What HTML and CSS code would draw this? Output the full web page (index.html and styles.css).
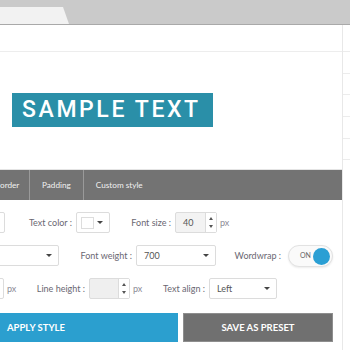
FILE: index.html
```html
<!DOCTYPE html>
<html lang="en">
<head>
  <meta charset="UTF-8" />
  <title>Text style editor</title>
  <link rel="stylesheet" href="styles.css">
</head>
<body>

<div class="topbar">
  <div class="tab"></div>
</div>

<div class="layout">
  <main class="editor">
    <div class="strip"></div>

    <div class="preview">
      <span class="sample">SAMPLE TEXT</span>
    </div>

    <nav class="tabs">
      <span class="tab-item first">order</span>
      <span class="tab-item">Padding</span>
      <span class="tab-item">Custom style</span>
    </nav>

    <div class="form">
      <div class="row">
        <span class="field cut-1"></span>
        <label class="lbl l-color">Text color :</label>
        <span class="field swatch"><i class="chip"></i><i class="caret"></i></span>
        <label class="lbl l-size">Font size :</label>
        <span class="field num">40<span class="spin"><i class="up"></i><i class="down"></i></span></span>
        <span class="unit">px</span>
      </div>

      <div class="row">
        <span class="field select cut-2"><i class="caret"></i></span>
        <label class="lbl l-weight">Font weight :</label>
        <span class="field select weight">700<i class="caret"></i></span>
        <label class="lbl l-wrap">Wordwrap :</label>
        <span class="toggle"><span class="on">ON</span><i class="knob"></i></span>
      </div>

      <div class="row">
        <span class="field cut-3"></span>
        <span class="unit">px</span>
        <label class="lbl l-line">Line height :</label>
        <span class="field num empty"><span class="spin"><i class="up"></i><i class="down"></i></span></span>
        <span class="unit">px</span>
        <label class="lbl l-align">Text align :</label>
        <span class="field select align">Left<i class="caret"></i></span>
      </div>
    </div>

    <div class="actions">
      <button class="btn apply">APPLY STYLE</button>
      <button class="btn preset">SAVE AS PRESET</button>
    </div>
  </main>

  <aside class="side">
    <div class="side-row"></div>
    <div class="side-row"></div>
    <div class="side-row"></div>
    <div class="side-row"></div>
    <div class="side-row"></div>
    <div class="side-row"></div>
  </aside>
</div>

</body>
</html>
```

FILE: styles.css
```css
/* Text style editor */
:root {
  --label: #6a6772;
  --line: #dcdcdc;
  --teal: #2a8fa8;
  --blue: #2b9fcf;
  --gray: #737373;
  --font: 'Lato', 'Open Sans', sans-serif;
}

* {
  box-sizing: border-box;
  margin: 0;
  padding: 0;
}

body {
  width: 350px;
  height: 350px;
  overflow: hidden;
  background: #fff;
  font-family: var(--font);
}

.topbar {
  height: 25px;
  background: #cacaca;
  border-bottom: 1px solid #a9a9a9;
  display: flex;
  align-items: flex-end;
}

.tab {
  width: 69px;
  height: 17px;
  background: #f2f2f2;
  clip-path: polygon(0 0, 63px 0, 100% 100%, 0 100%);
}

.layout {
  display: flex;
  height: 325px;
}

.editor {
  width: 343px;
  border-right: 1px solid #e8e8e8;
  display: flex;
  flex-direction: column;
}

.strip {
  height: 27px;
  border-bottom: 1px solid #ededed;
}

.preview {
  height: 118px;
  padding: 41px 0 0 12px;
  border-bottom: 1px solid #e4e4e4;
}

.sample {
  display: inline-block;
  width: 201px;
  height: 34px;
  background: var(--teal);
  color: #fff;
  font-family: 'Roboto', sans-serif;
  font-weight: 500;
  font-size: 23px;
  line-height: 34px;
  letter-spacing: 2.6px;
  padding-left: 10px;
}

.tabs {
  height: 30px;
  width: 342px;
  background: var(--gray);
  display: flex;
  align-items: center;
}

.tab-item {
  height: 30px;
  line-height: 30px;
  padding: 0 12px;
  font-size: 8.2px;
  color: #f1f1f1;
  border-right: 1px solid #9a9a9a;
  white-space: nowrap;
}

.tab-item.first {
  width: 30px;
  padding: 0;
  text-align: right;
  padding-right: 12px;
}

.tab-item:last-child {
  border-right: none;
}

.form {
  display: flex;
  flex-direction: column;
  gap: 12px;
  padding-top: 12px;
}

.row {
  display: flex;
  align-items: center;
  height: 21px;
}

/* labels fill the space up to their field, text set to the right */
.lbl {
  font-size: 9px;
  color: var(--label);
  white-space: nowrap;
  text-align: right;
  padding-right: 4px;
  flex-shrink: 0;
}

.unit {
  font-size: 9px;
  color: #8a8a95;
  margin-left: 3px;
  width: 14px;
  flex-shrink: 0;
}

.field {
  position: relative;
  flex-shrink: 0;
  height: 21px;
  border: 1px solid var(--line);
  border-radius: 2px;
  background: #fff;
  font-size: 9px;
  color: #555;
  display: flex;
  align-items: center;
  padding-left: 7px;
}

.caret {
  position: absolute;
  right: 6px;
  top: 8px;
  border-left: 3px solid transparent;
  border-right: 3px solid transparent;
  border-top: 3px solid #444;
}

.spin {
  position: absolute;
  right: 0;
  top: 0;
  bottom: 0;
  width: 11px;
  border-left: 1px solid var(--line);
  background: #fff;
}

.spin .up,
.spin .down {
  position: absolute;
  left: 3px;
  border-left: 2.5px solid transparent;
  border-right: 2.5px solid transparent;
}

.spin .up {
  top: 4px;
  border-bottom: 3px solid #555;
}

.spin .down {
  bottom: 4px;
  border-top: 3px solid #555;
}

/* row 1 */
.cut-1 { width: 8px; margin-left: -4px; }
.l-color { width: 71px; }
.swatch { width: 34px; }
.chip {
  position: absolute;
  left: 4px;
  top: 4px;
  width: 13px;
  height: 12px;
  border: 1px solid #ddd;
  background: #fff;
}
.l-size { width: 65px; }
.num { width: 42px; background: #f3f3f3; }
.num.empty { width: 41px; background: #efefef; }

/* row 2 */
.cut-2 { width: 62px; margin-left: -3px; }
.l-weight { width: 77px; }
.weight { width: 80px; }
.l-wrap { width: 72px; padding-right: 7px; }

.toggle {
  position: relative;
  flex-shrink: 0;
  width: 45px;
  height: 22px;
  border: 1px solid #e2e2e2;
  border-radius: 11px;
  background: #fafafa;
  box-shadow: 0 1px 2px rgba(0, 0, 0, 0.08);
}

.toggle .on {
  position: absolute;
  left: 11px;
  top: 5px;
  font-size: 7px;
  color: #666;
}

.toggle .knob {
  position: absolute;
  right: 2px;
  top: 2px;
  width: 17px;
  height: 17px;
  border-radius: 50%;
  background: #2a9fd4;
}

/* row 3 */
.cut-3 { width: 6px; margin-left: -5px; }
.row .cut-3 + .unit { margin-left: 3px; }
.l-line { width: 68px; }
.l-align { width: 62px; }
.align { width: 68px; }

.actions {
  display: flex;
  gap: 5px;
  margin-top: 14px;
}

.btn {
  height: 29px;
  border: none;
  font-family: var(--font);
  font-weight: bold;
  font-size: 9.5px;
  color: #fff;
}

.apply {
  width: 178px;
  background: var(--blue);
  text-align: left;
  padding-left: 7px;
}

.preset {
  width: 150px;
  background: #707070;
  border: 1px solid #8e8e8e;
}

.side {
  flex: 1;
  padding-top: 26px;
}

.side-row {
  height: 21.7px;
  border-top: 1px solid #ececec;
}
```
